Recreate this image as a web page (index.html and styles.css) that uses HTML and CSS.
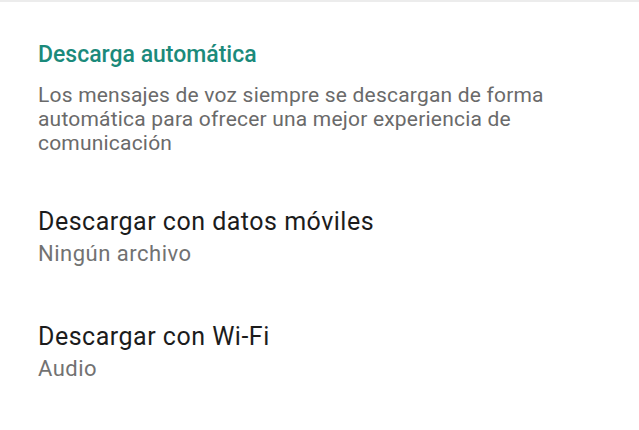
FILE: index.html
```html
<!DOCTYPE html>
<html lang="es">
<head>
<meta charset="utf-8">
<link rel="stylesheet" href="styles.css">
</head>
<body>
<div class="page">
  <section class="section">
    <h2 class="section-title">Descarga automática</h2>
    <p class="section-desc">Los mensajes de voz siempre se descargan de forma automática para ofrecer una mejor experiencia de comunicación</p>
  </section>
  <div class="item">
    <div class="item-title">Descargar con datos móviles</div>
    <div class="item-sub">Ningún archivo</div>
  </div>
  <div class="item">
    <div class="item-title">Descargar con Wi-Fi</div>
    <div class="item-sub">Audio</div>
  </div>
</div>
</body>
</html>
```

FILE: styles.css
```css
html, body {
  margin: 0;
  padding: 0;
  background: #ffffff;
}
body {
  font-family: Roboto, "Noto Sans", sans-serif;
  width: 639px;
  height: 430px;
  overflow: hidden;
}
.page {
  border-top: 2px solid #ececec;
  padding: 0 38px;
  display: flex;
  flex-direction: column;
}
.section {
  padding-top: 39px;
}
.section-title {
  margin: 0;
  font-size: 23px;
  font-weight: 500;
  color: #1b8a7b;
  line-height: 28px;
}
.section-desc {
  margin: 14px 0 0 0;
  font-size: 21px;
  letter-spacing: 0.2px;
  line-height: 24px;
  color: #6a6a6a;
  max-width: 540px;
}
.item {
  display: flex;
  flex-direction: column;
}
.section + .item {
  margin-top: 53px;
}
.item + .item {
  margin-top: 55px;
}
.item-title {
  font-size: 25px;
  letter-spacing: 0.5px;
  line-height: 28px;
  color: #1c1c1c;
}
.item-sub {
  margin-top: 4px;
  font-size: 22px;
  letter-spacing: 0.5px;
  line-height: 28px;
  color: #727272;
}
```
